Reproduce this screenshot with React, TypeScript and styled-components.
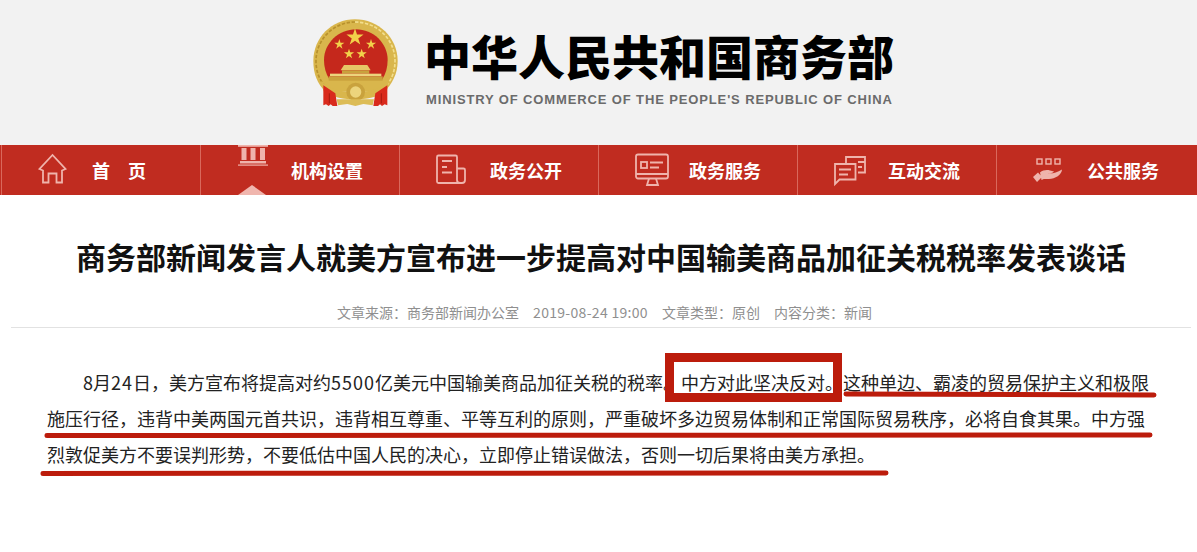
import { FC, ReactNode } from "react";
import styled, { createGlobalStyle } from "styled-components";

const GlobalStyle = createGlobalStyle`
  html, body {
    margin: 0;
    padding: 0;
    background: #fff;
  }
  body {
    font-family: "Noto Sans CJK SC", "Liberation Sans", sans-serif;
  }
`;

const Page = styled.div`
  width: 1197px;
  height: 552px;
  overflow: hidden;
`;

const Header = styled.header`
  height: 145px;
  box-sizing: border-box;
  background: #f2f2f2;
  padding: 10px 0 0 300px;
  display: flex;
  align-items: flex-start;
  gap: 14px;
`;

const Brand = styled.div`
  display: flex;
  flex-direction: column;
  padding-top: 15px;
`;

const BrandName = styled.div`
  font-size: 47px;
  line-height: 60px;
  font-weight: 900;
  color: #000;
  white-space: nowrap;
`;

const BrandEnglish = styled.div`
  font-family: "Liberation Sans", sans-serif;
  font-size: 13px;
  line-height: 16px;
  margin-top: 7px;
  padding-left: 2px;
  font-weight: 700;
  color: #6b6b6b;
  letter-spacing: 0.87px;
  white-space: nowrap;
`;

const Nav = styled.nav`
  height: 50px;
  background: #c02c20;
  display: grid;
  grid-template-columns: repeat(6, 199px);
  padding-left: 1px;
`;

const NavItem = styled.a<{ $active?: boolean }>`
  position: relative;
  overflow: hidden;
  display: flex;
  align-items: center;
  border-left: 1px solid #d9685c;
  color: #fff;
  font-size: 18px;
  font-weight: 700;
  white-space: nowrap;

  &::after {
    content: "";
    display: ${(p) => (p.$active ? "block" : "none")};
    position: absolute;
    left: 37px;
    bottom: 0;
    border-left: 14px solid transparent;
    border-right: 14px solid transparent;
    border-bottom: 10px solid #f0b6ae;
  }
`;

const NavIcon = styled.svg`
  flex: none;
  width: 40px;
  height: 50px;
  margin: 0 20px 0 30px;
  overflow: visible;
  fill: none;
  stroke: #efb4ac;
  stroke-width: 1.8;
`;

const NavLabel = styled.span<{ $wide?: boolean }>`
  letter-spacing: ${(p) => (p.$wide ? "18px" : "0")};
`;

const Article = styled.main`
  position: relative;
  margin: 0 6px 0 11px;
`;

const Title = styled.h1`
  margin: 0;
  padding-top: 40px;
  font-size: 30px;
  line-height: 42px;
  font-weight: 700;
  color: #111;
  text-align: center;
  white-space: nowrap;
`;

const Meta = styled.div`
  margin-top: 25px;
  height: 25px;
  padding-left: 7px;
  display: flex;
  justify-content: center;
  gap: 14px;
  font-size: 14px;
  line-height: 20px;
  color: #8f8f8f;
  border-bottom: 1px solid #e2e2e2;
`;

const MetaTime = styled.span`
  letter-spacing: 0.3px;
`;

const Body = styled.p`
  margin: 36px 0 0;
  padding: 0 0 0 36px;
  width: 1110px;
  font-size: 18px;
  line-height: 36px;
  color: #222;
  text-indent: 36px;
`;

const Digits = styled.span`
  letter-spacing: 1px;
`;

const Annotations = styled.svg`
  position: absolute;
  left: -11px;
  top: -195px;
  width: 1197px;
  height: 552px;
  pointer-events: none;
  fill: none;
  stroke: #bc1c0c;
`;

const navItems: { label: string; wide?: boolean; active?: boolean; icon: ReactNode }[] = [
  {
    label: "首页",
    wide: true,
    icon: <path d="M20.500 10L7.500 24l3.500 1.500V37.500h5.500v-9h8v9H30V25.500l3.500-1.500z" />,
  },
  {
    label: "机构设置",
    active: true,
    icon: (
      <g fill="#efb4ac" stroke="none">
        <rect x="7" y="0" width="30" height="1.800" />
        <rect x="10.500" y="3" width="5" height="12" />
        <rect x="19.500" y="3" width="5" height="12" />
        <rect x="29" y="3" width="5" height="12" />
        <rect x="9" y="16" width="26" height="2.500" />
        <rect x="7" y="19.500" width="30" height="1.200" />
      </g>
    ),
  },
  {
    label: "政务公开",
    icon: (
      <>
        <path d="M27 24V12a1.500 1.500 0 0 0-1.500-1.500H8.500A1.500 1.500 0 0 0 7 12v24.500A1.500 1.500 0 0 0 8.500 38H32a3 3 0 0 0 3-3V25a1.500 1.500 0 0 0-1.500-1.500H27v11.500a3 3 0 0 0 3 3" />
        <path d="M12 16h10M12 22h5M12 27.500h10" />
      </>
    ),
  },
  {
    label: "政务服务",
    icon: (
      <>
        <rect x="7" y="9.500" width="32" height="24" rx="2" />
        <path d="M7 29h32M20 33.500l-2 6.500h11l-2-6.500" />
        <rect x="12" y="17" width="6" height="6" />
        <path d="M21 17.500h13M21 22.500h9" />
      </>
    ),
  },
  {
    label: "互动交流",
    icon: (
      <>
        <path d="M18 18v-6h19v15.500h-7" />
        <path d="M7 19h20.500v15.500H11.500L7 39z" />
        <path d="M11 24.500h12M11 29.500h9M30 17h7M30 22h4" />
      </>
    ),
  },
  {
    label: "公共服务",
    icon: (
      <>
        <g strokeWidth="1.400">
          <rect x="10" y="14" width="5" height="5" />
          <rect x="19" y="14" width="5" height="5" />
          <rect x="28" y="14" width="5" height="5" />
        </g>
        <path
          d="M6 32l5-4.500 4 4.500-5 5zM13 27.500c3-2.500 7-3 10-2l4 1c-1 1.200-3 2-6 1.500 3 1 8 0 14-3.500 0 5-7 9.500-13 9.500h-4c-1.500 0-2.500 .5-3.500 1z"
          fill="#efb4ac"
          stroke="none"
        />
      </>
    ),
  },
];

const Star: FC<{ x: number; y: number; r: number }> = ({ x, y, r }) => {
  const points = Array.from({ length: 10 }, (_, i) => {
    const radius = i % 2 ? r * 0.38 : r;
    const angle = (Math.PI / 5) * i - Math.PI / 2;
    return `${x + radius * Math.cos(angle)},${y + radius * Math.sin(angle)}`;
  }).join(" ");
  return <polygon points={points} fill="#f2d24a" />;
};

const Emblem = () => (
  <svg width="110" height="110" viewBox="0 0 330 330" style={{ flex: "none" }}>
    <path
      d="M165 28c70 0 128 55 128 125 0 40-18 70-40 92l-176 0c-24-22-37-52-37-92C40 83 95 28 165 28z"
      fill="#d9b64c"
    />
    <path
      d="M165 36c66 0 120 52 120 117 0 28-8 52-24 72"
      fill="none"
      stroke="#f3df8e"
      strokeWidth="5"
      strokeDasharray="10 5"
    />
    <path
      d="M165 36c-64 0-117 52-117 117 0 28 8 52 24 72"
      fill="none"
      stroke="#b8912c"
      strokeWidth="5"
      strokeDasharray="10 5"
    />
    <path
      d="M168 58c52 0 95 42 95 92 0 22-6 42-16 58H88c-10-16-16-36-16-58 0-50 44-92 96-92z"
      fill="#c5281c"
    />
    <Star x={165} y={82} r={27} />
    <Star x={118} y={103} r={16} />
    <Star x={213} y={103} r={16} />
    <Star x={147} y={132} r={16} />
    <Star x={185} y={132} r={16} />
    <path d="M132 165h70l10 16H122z" fill="#e6c766" />
    <rect x="126" y="181" width="82" height="10" fill="#c9a23d" />
    <rect x="90" y="191" width="154" height="8" fill="#ecd47c" />
    <rect x="86" y="199" width="162" height="13" fill="#c9a23d" />
    <path d="M62 212c30 28 68 34 103 34s73-6 103-34l-8 32c-30 20-64 24-95 24s-66-4-94-24z" fill="#d9b64c" />
    <path d="M70 226l36 24 6 38H98l-6-5-6 5-8-5-8 3z" fill="#d92a1c" />
    <path d="M262 226l-36 24-6 38h14l6-5 6 5 8-5 8 3z" fill="#d92a1c" />
    <path d="M88 250v30M244 250v30" stroke="#a81a10" strokeWidth="3" />
    <circle cx="167" cy="246" r="28" fill="#c9a23d" />
    <circle cx="167" cy="246" r="17" fill="#ecd47c" />
    <path d="M110 268h112l-4 18-28-4-24 6-24-6-28 4z" fill="#dcbc56" />
  </svg>
);

const App = () => (
  <Page>
    <GlobalStyle />
    <Header>
      <Emblem />
      <Brand>
        <BrandName>中华人民共和国商务部</BrandName>
        <BrandEnglish>MINISTRY OF COMMERCE OF THE PEOPLE'S REPUBLIC OF CHINA</BrandEnglish>
      </Brand>
    </Header>
    <Nav>
      {navItems.map((item) => (
        <NavItem key={item.label} $active={item.active}>
          <NavIcon viewBox="0 0 40 50">{item.icon}</NavIcon>
          <NavLabel $wide={item.wide}>{item.label}</NavLabel>
        </NavItem>
      ))}
    </Nav>
    <Article>
      <Title>商务部新闻发言人就美方宣布进一步提高对中国输美商品加征关税税率发表谈话</Title>
      <Meta>
        <span>文章来源：商务部新闻办公室</span>
        <MetaTime>2019-08-24 19:00</MetaTime>
        <span>文章类型：原创</span>
        <span>内容分类：新闻</span>
      </Meta>
      <Body>
        8月<Digits>24</Digits>日，美方宣布将提高对约<Digits>5500</Digits>亿美元中国输美商品加征关税的税率。中方对此坚决反对。这种单边、霸凌的贸易保护主义和极限施压行径，违背中美两国元首共识，违背相互尊重、平等互利的原则，严重破坏多边贸易体制和正常国际贸易秩序，必将自食其果。中方强烈敦促美方不要误判形势，不要低估中国人民的决心，立即停止错误做法，否则一切后果将由美方承担。
      </Body>
      <Annotations viewBox="0 0 1197 552">
        <rect x="669.500" y="357.500" width="168" height="40" strokeWidth="9" />
        <g strokeWidth="5" strokeLinecap="round">
          <path d="M846 394L1154 395" />
          <path d="M47 435.500L1150 435" />
          <path d="M43 473.500L886 473" />
        </g>
      </Annotations>
    </Article>
  </Page>
);

export default App;
